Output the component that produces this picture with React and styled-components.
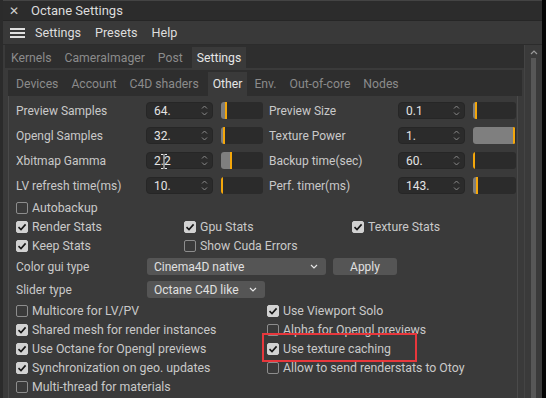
import styled, { createGlobalStyle } from "styled-components";

const GlobalStyle = createGlobalStyle`
  html, body {
    margin: 0;
    padding: 0;
    background: #050505;
  }
  body {
    font-family: Roboto, "Liberation Sans", Arial, sans-serif;
    font-size: 12px;
    color: #c9c9c9;
  }
`;

// Window
const Window = styled.div`
  width: 542px;
  height: 398px;
  background: #3a3a3a;
  border-left: 3px solid #2b2b2b;
  box-sizing: border-box;
  display: flex;
  flex-direction: column;
  overflow: hidden;
`;

// TitleBar
const TitleBar = styled.div`
  height: 21px;
  flex-shrink: 0;
  display: flex;
  align-items: center;
  gap: 12px;
  padding-left: 6px;
  background: #2c2c2c;
  border-top: 1px solid #444;
  border-bottom: 1px solid #262626;
  box-sizing: border-box;
  color: #dcdcdc;
  font-size: 13px;
`;

const CloseMark = styled.span`
  color: #cfcfcf;
  font-size: 12px;
  width: 10px;
  text-align: center;
`;

// MenuBar
const MenuBar = styled.div`
  height: 23px;
  flex-shrink: 0;
  display: flex;
  align-items: center;
  padding-left: 7px;
  background: #393939;
  border-bottom: 1px solid #2c2c2c;
  color: #dedede;
  font-size: 12.6px;
`;

const Burger = styled.div`
  width: 15px;
  display: flex;
  flex-direction: column;
  gap: 2px;
  margin-right: 10px;
  span {
    height: 2px;
    background: #e0e0e0;
  }
`;

const MenuItem = styled.span`
  margin-right: 14px;
`;

// Body
const Body = styled.div`
  flex: 1;
  display: flex;
  min-height: 0;
`;

const Main = styled.div`
  flex: 1;
  display: flex;
  flex-direction: column;
  padding-left: 2px;
  min-width: 0;
`;

// TabBar
const TabBar = styled.div`
  display: flex;
  align-items: stretch;
  height: ${(p) => p.h}px;
  flex-shrink: 0;
  background: #2e2e2e;
  padding-left: ${(p) => p.pad}px;
  padding-top: 2px;
  box-sizing: border-box;
  font-size: 12.2px;
`;

const Tab = styled.div`
  display: flex;
  align-items: center;
  padding: 0 ${(p) => (p.active ? 5 : 4)}px;
  margin-right: ${(p) => (p.active ? 3 : 5)}px;
  color: ${(p) => (p.active ? "#e6e6e6" : "#8b8b8b")};
  background: ${(p) => (p.active ? "#3a3a3a" : "transparent")};
`;

// Inner panel
const Inner = styled.div`
  flex: 1;
  display: flex;
  flex-direction: column;
  margin: 2px 2px 0 3px;
  min-height: 0;
`;

const Content = styled.div`
  flex: 1;
  border-left: 1px solid #4a4a4a;
  border-right: 1px solid #4a4a4a;
  margin-right: 4px;
  padding: 2px 0 0 7px;
  display: flex;
  flex-direction: column;
`;

// Param rows
const ParamRow = styled.div`
  height: 25px;
  display: flex;
  align-items: center;
`;

const Label = styled.span`
  width: ${(p) => p.w}px;
  flex-shrink: 0;
  white-space: nowrap;
`;

const NumField = styled.div`
  position: relative;
  width: 67px;
  height: 17px;
  box-sizing: border-box;
  background: #2b2b2b;
  border: 1px solid #262626;
  border-radius: 4px;
  display: flex;
  align-items: center;
  justify-content: space-between;
  padding: 0 4px 0 7px;
  color: #e4e4e4;
`;

const Cursor = styled.svg`
  position: absolute;
  left: 13px;
  top: 0px;
`;

const SliderTrack = styled.div`
  width: ${(p) => p.w}px;
  height: 17px;
  margin-left: ${(p) => p.ml}px;
  margin-right: ${(p) => p.mr}px;
  background: #2b2b2b;
  border-radius: 3px;
  display: flex;
  overflow: hidden;
  flex-shrink: 0;
`;

const SliderFill = styled.div`
  background: #7f7f7f;
`;

const SliderMark = styled.div`
  width: 2px;
  background: #f4a70b;
`;

const Spinner = () => (
  <svg width="7" height="13" viewBox="0 0 7 13" fill="none" stroke="#8a8a8a" strokeWidth="1">
    <path d="M1 4.5 L3.5 2 L6 4.5" />
    <path d="M1 8.5 L3.5 11 L6 8.5" />
  </svg>
);

const Slider = ({ w, ml, mr, fill, full }) => (
  <SliderTrack w={w} ml={ml} mr={mr}>
    <SliderFill style={{ width: full ? w - 3 : fill }} />
    <SliderMark />
  </SliderTrack>
);

const Param = ({ label, lw, value, fill, full, ml, mr, sw, cursor }) => (
  <>
    <Label w={lw}>{label}</Label>
    <NumField>
      <span>{value}</span>
      <Spinner />
      {cursor && (
        <Cursor width="8" height="17" viewBox="0 0 8 17" fill="none" stroke="#e8e8e8" strokeWidth="1">
          <path d="M1 1.5 H3.5 M4.5 1.5 H7 M4 2 V15 M1 15.5 H3.5 M4.5 15.5 H7" />
        </Cursor>
      )}
    </NumField>
    <Slider w={sw} ml={ml} mr={mr} fill={fill} full={full} />
  </>
);

// Checkboxes
const CheckGrid = styled.div`
  display: grid;
  grid-template-columns: ${(p) => p.cols};
  grid-auto-rows: 19px;
`;

const CheckItem = styled.label`
  position: relative;
  display: flex;
  align-items: center;
  gap: 4px;
  white-space: nowrap;
  font-size: 12.3px;
`;

const Box = styled.span`
  width: 12px;
  height: 12px;
  box-sizing: border-box;
  border-radius: 2px;
  flex-shrink: 0;
  display: flex;
  align-items: center;
  justify-content: center;
  background: ${(p) => (p.on ? "#d2d2d2" : "transparent")};
  border: 1px solid ${(p) => (p.on ? "#d2d2d2" : "#8d8d8d")};
`;

const Highlight = styled.span`
  position: absolute;
  left: -5px;
  top: -6px;
  width: 155px;
  height: 29px;
  box-sizing: border-box;
  border: 2px solid #e8373c;
  pointer-events: none;
`;

const Check = ({ on, children, mark }) => (
  <CheckItem>
    <Box on={on}>
      {on && (
        <svg width="10" height="10" viewBox="0 0 10 10" fill="none" stroke="#161616" strokeWidth="1.6">
          <path d="M1.5 5.2 L4 7.6 L8.6 2.4" />
        </svg>
      )}
    </Box>
    <span>{children}</span>
    {mark && <Highlight />}
  </CheckItem>
);

// Select rows
const SelectRow = styled.div`
  height: ${(p) => p.h}px;
  display: flex;
  align-items: center;
`;

const Select = styled.div`
  width: ${(p) => p.w}px;
  height: 17px;
  box-sizing: border-box;
  background: #555;
  border-radius: 3px;
  display: flex;
  align-items: center;
  justify-content: space-between;
  padding: 0 8px 0 7px;
  color: #e0e0e0;
`;

const Button = styled.div`
  width: 64px;
  height: 17px;
  margin-left: 7px;
  background: #555;
  border-radius: 3px;
  display: flex;
  align-items: center;
  justify-content: center;
  color: #e0e0e0;
`;

const Chevron = () => (
  <svg width="8" height="5" viewBox="0 0 8 5" fill="none" stroke="#e6e6e6" strokeWidth="1.2">
    <path d="M1 1 L4 4 L7 1" />
  </svg>
);

// Scroll column
const ScrollCol = styled.div`
  width: 17px;
  flex-shrink: 0;
  display: flex;
  flex-direction: column;
  align-items: center;
  padding-top: 5px;
  border-left: 1px solid #444;
`;

const ScrollTrack = styled.div`
  width: 5px;
  flex: 1;
  margin-top: 3px;
  background: #575757;
`;

const App = () => {
  return (
    <>
      <GlobalStyle />
      <Window>
        <TitleBar>
          <CloseMark>✕</CloseMark>
          <span>Octane Settings</span>
        </TitleBar>
        <MenuBar>
          <Burger>
            <span />
            <span />
            <span />
          </Burger>
          <MenuItem>Settings</MenuItem>
          <MenuItem>Presets</MenuItem>
          <MenuItem>Help</MenuItem>
        </MenuBar>
        <Body>
          <Main>
            <TabBar h={23} pad={2}>
              <Tab>Kernels</Tab>
              <Tab>CameraImager</Tab>
              <Tab>Post</Tab>
              <Tab active>Settings</Tab>
            </TabBar>
            <Inner>
              <TabBar h={26} pad={4}>
                <Tab>Devices</Tab>
                <Tab>Account</Tab>
                <Tab>C4D shaders</Tab>
                <Tab active>Other</Tab>
                <Tab>Env.</Tab>
                <Tab>Out-of-core</Tab>
                <Tab>Nodes</Tab>
              </TabBar>
              <Content>
                <ParamRow>
                  <Param label="Preview Samples" lw={130} value="64." fill={4} sw={42} ml={8} mr={6} />
                  <Param label="Preview Size" lw={129} value="0.1" fill={2} sw={43} ml={8} mr={0} />
                </ParamRow>
                <ParamRow>
                  <Param label="Opengl Samples" lw={130} value="32." fill={2} sw={42} ml={8} mr={6} />
                  <Param label="Texture Power" lw={129} value="1." full sw={43} ml={8} mr={0} />
                </ParamRow>
                <ParamRow>
                  <Param label="Xbitmap Gamma" lw={130} value="2.2" fill={9} sw={42} ml={8} mr={6} cursor />
                  <Param label="Backup time(sec)" lw={129} value="60." fill={0} sw={43} ml={8} mr={0} />
                </ParamRow>
                <ParamRow>
                  <Param label="LV refresh time(ms)" lw={130} value="10." fill={0} sw={42} ml={8} mr={6} />
                  <Param label="Perf. timer(ms)" lw={129} value="143." fill={3} sw={43} ml={8} mr={0} />
                </ParamRow>

                <CheckGrid cols="168px 168px 168px">
                  <Check>Autobackup</Check>
                  <span />
                  <span />
                  <Check on>Render Stats</Check>
                  <Check on>Gpu Stats</Check>
                  <Check on>Texture Stats</Check>
                  <Check on>Keep Stats</Check>
                  <Check>Show Cuda Errors</Check>
                </CheckGrid>

                <SelectRow h={23}>
                  <Label w={131}>Color gui type</Label>
                  <Select w={179}>
                    <span>Cinema4D native</span>
                    <Chevron />
                  </Select>
                  <Button>Apply</Button>
                </SelectRow>
                <SelectRow h={23}>
                  <Label w={131}>Slider type</Label>
                  <Select w={118}>
                    <span>Octane C4D like</span>
                    <Chevron />
                  </Select>
                </SelectRow>

                <CheckGrid cols="251px 251px">
                  <Check>Multicore for LV/PV</Check>
                  <Check on>Use Viewport Solo</Check>
                  <Check on>Shared mesh for render instances</Check>
                  <Check>Alpha for Opengl previews</Check>
                  <Check on>Use Octane for Opengl previews</Check>
                  <Check on mark>Use texture caching</Check>
                  <Check on>Synchronization on geo. updates</Check>
                  <Check>Allow to send renderstats to Otoy</Check>
                  <Check>Multi-thread for materials</Check>
                </CheckGrid>
              </Content>
            </Inner>
          </Main>
          <ScrollCol>
            <svg width="8" height="5" viewBox="0 0 8 5" fill="none" stroke="#9a9a9a" strokeWidth="1.2">
              <path d="M1 4 L4 1 L7 4" />
            </svg>
            <ScrollTrack />
          </ScrollCol>
        </Body>
      </Window>
    </>
  );
};

export default App;
